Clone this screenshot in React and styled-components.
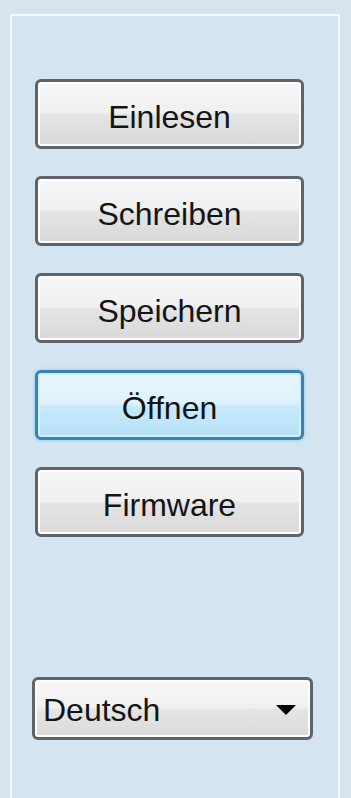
import React from "react";
import styled, { createGlobalStyle } from "styled-components";

const Global = createGlobalStyle`
  html, body { margin: 0; padding: 0; background: #d8e3ee; }
  body { font-family: "Liberation Sans", Arial, sans-serif; }
`;

const Page = styled.div`
  width: 351px;
  height: 798px;
  box-sizing: border-box;
  padding: 14px 11px 0 10px;
  background: #d8e3ee;
  overflow: hidden;
`;

const Panel = styled.div`
  height: 100%;
  box-sizing: border-box;
  border-left: 2px solid #f4f9fd;
  border-top: 2px solid #f4f9fd;
  border-right: 2px solid #f4f9fd;
  background: #d5e4f1;
  display: flex;
  flex-direction: column;
  padding: 63px 0 0 23px;
`;

const ButtonList = styled.div`
  display: flex;
  flex-direction: column;
  gap: 27px;
`;

const Btn = styled.button`
  width: 269px;
  height: 70px;
  box-sizing: border-box;
  border-radius: 6px;
  border: 3px solid ${(p) => (p.$active ? "#3d7fae" : "#5e6469")};
  background: ${(p) =>
    p.$active
      ? "linear-gradient(#e8f6fd 0%, #def2fc 48%, #c8eafc 52%, #b6e1f7 100%)"
      : "linear-gradient(#f7f7f7 0%, #f0f0f0 48%, #e4e4e4 52%, #d9d9d9 100%)"};
  box-shadow: inset 0 0 0 2px ${(p) => (p.$active ? "#d0f0fe" : "#fdfdfd")}
    ${(p) => (p.$active ? ", 0 0 3px 1px #9ad7f5" : "")};
  font-family: "Liberation Sans", Arial, sans-serif;
  font-size: 32px;
  color: #141414;
  padding: 6px 0 0 0;
  display: flex;
  align-items: center;
  justify-content: center;
  cursor: pointer;
`;

const Spacer = styled.div`
  flex: 1;
`;

const Select = styled.div`
  margin: 0 0 58px -3px;
  width: 281px;
  height: 63px;
  box-sizing: border-box;
  border: 3px solid #5e6469;
  border-radius: 6px;
  background: linear-gradient(#f8f8f8 0%, #f0f0f0 48%, #e5e5e5 52%, #dadada 100%);
  box-shadow: inset 0 0 0 2px #fdfdfd;
  display: flex;
  align-items: center;
  padding: 4px 14px 0 8px;
  font-size: 32px;
  color: #141414;
`;

const SelectText = styled.span`
  flex: 1;
`;

const Arrow = styled.span`
  width: 0;
  height: 0;
  border-left: 10px solid transparent;
  border-right: 10px solid transparent;
  border-top: 10px solid #000;
  margin-bottom: 2px;
`;

const items = ["Einlesen", "Schreiben", "Speichern", "Öffnen", "Firmware"];

export default function App() {
  return (
    <>
      <Global />
      <Page>
        <Panel>
          <ButtonList>
            {items.map((t) => (
              <Btn key={t} $active={t === "Öffnen"}>
                {t}
              </Btn>
            ))}
          </ButtonList>
          <Spacer />
          <Select>
            <SelectText>Deutsch</SelectText>
            <Arrow />
          </Select>
        </Panel>
      </Page>
    </>
  );
}
